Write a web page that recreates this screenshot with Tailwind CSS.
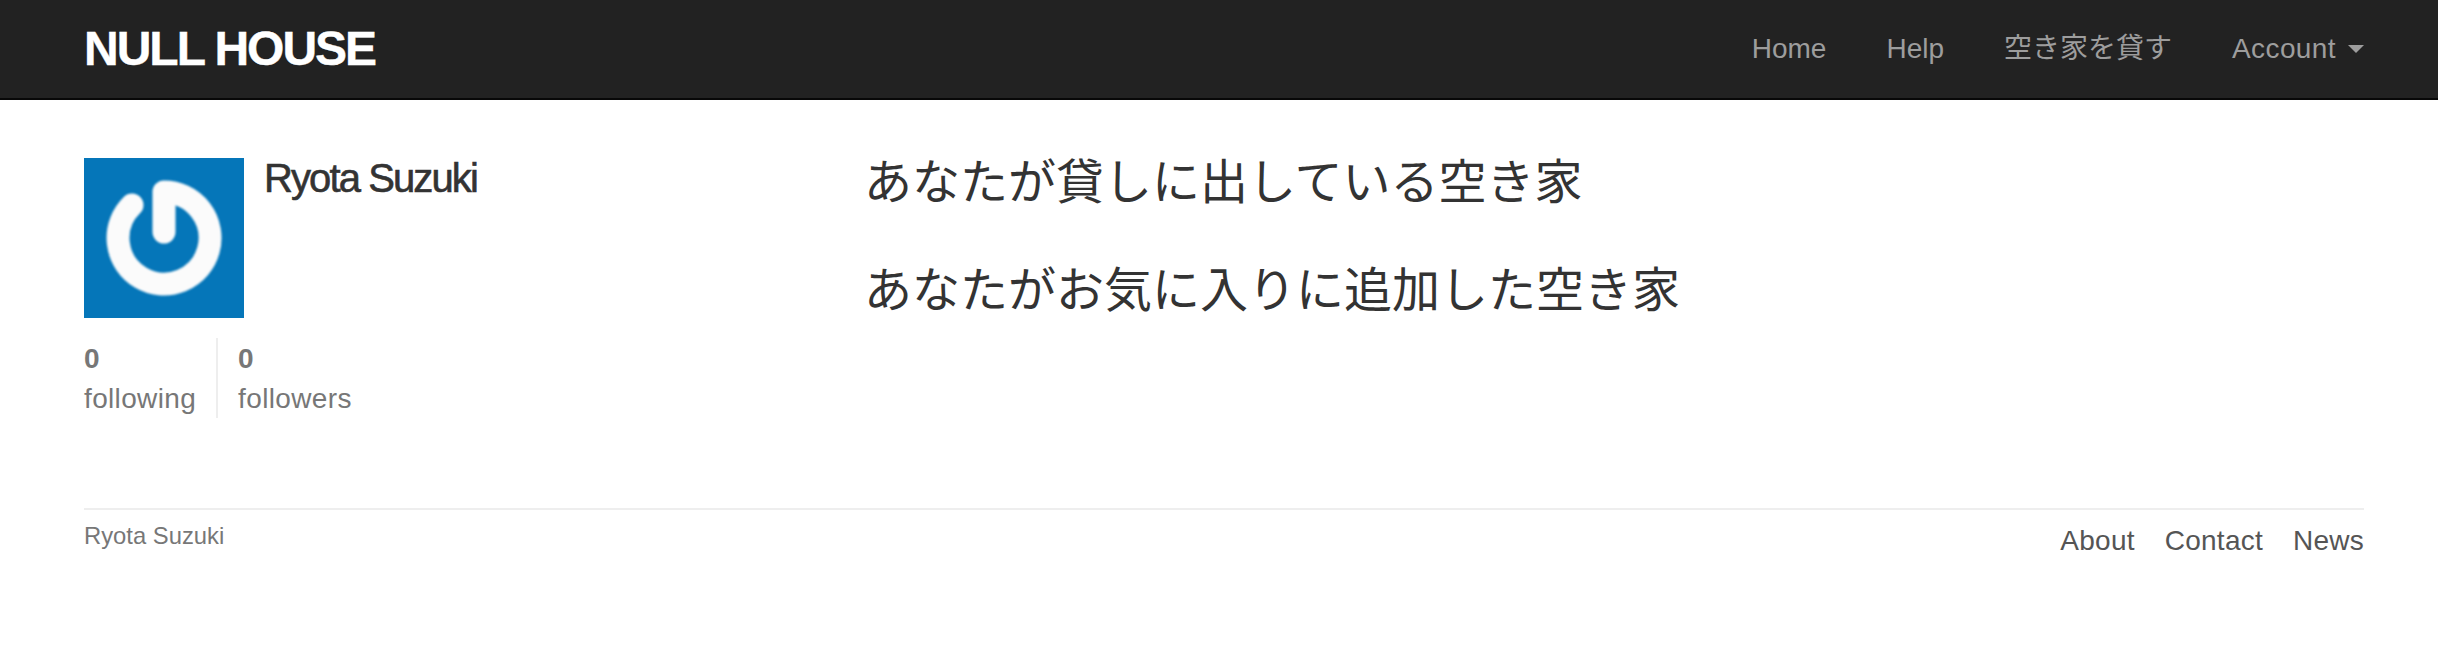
<!DOCTYPE html>
<html lang="ja">
<head>
<meta charset="utf-8">
<title>NULL HOUSE</title>
<script src="https://cdn.jsdelivr.net/npm/@tailwindcss/browser@4"></script>
</head>
<body class="bg-white font-['Liberation_Sans','Noto_Sans_CJK_JP',sans-serif] text-[28px] leading-[40px] text-[#333]">
<nav class="h-[100px] bg-[#222] border-b-2 border-[#080808] pl-[84px] pr-[74px] flex items-center justify-between">
  <a class="text-[48px] leading-[48px] font-bold tracking-[-2px] text-white [-webkit-text-stroke:0.4px_white]">NULL HOUSE</a>
  <ul class="flex gap-[60px] text-[#9d9d9d]">
    <li>Home</li>
    <li>Help</li>
    <li>空き家を貸す</li>
    <li class="flex items-center gap-[12px] tracking-[0.4px]">Account<span class="w-0 h-0 border-x-[8px] border-x-transparent border-t-[8px] border-t-[#9d9d9d]"></span></li>
  </ul>
</nav>
<main class="flex px-[84px] pt-[58px]">
  <section class="w-[780px] shrink-0">
    <div class="flex gap-[20px]">
      <svg class="w-[160px] h-[160px] bg-[#0576b9]" viewBox="0 0 160 160">
        <path class="blur-[1px]" d="M48 47A46 46 0 1 0 80 34L80 74" fill="none" stroke="#fbfbfb" stroke-width="23" stroke-linecap="round" stroke-linejoin="round"/>
      </svg>
      <h2 class="text-[40px] leading-[40px] tracking-[-1.9px] text-[#333] [-webkit-text-stroke:0.6px_#333]">Ryota Suzuki</h2>
    </div>
    <ul class="flex mt-[20px] text-[#777] tracking-[0.35px]">
      <li class="h-[80px] pt-[1px] pr-[20px] border-r-2 border-[#eee]"><strong class="block font-bold">0</strong>following</li>
      <li class="h-[80px] pt-[1px] pl-[20px]"><strong class="block font-bold">0</strong>followers</li>
    </ul>
  </section>
  <section class="flex-1 -mt-[2px] text-[48px] leading-[53px] text-[#333]">
    <h3 class="mb-[55px]">あなたが貸しに出している空き家</h3>
    <h3>あなたがお気に入りに追加した空き家</h3>
  </section>
</main>
<footer class="ml-[84px] mr-[74px] mt-[90px] border-t-2 border-[#eee] pt-[10px] flex justify-between">
  <small class="text-[23.8px] leading-[32px] text-[#777]">Ryota Suzuki</small>
  <ul class="flex gap-[30px] pt-[1px] text-[#555] tracking-[0.25px]">
    <li>About</li>
    <li>Contact</li>
    <li>News</li>
  </ul>
</footer>
</body>
</html>
